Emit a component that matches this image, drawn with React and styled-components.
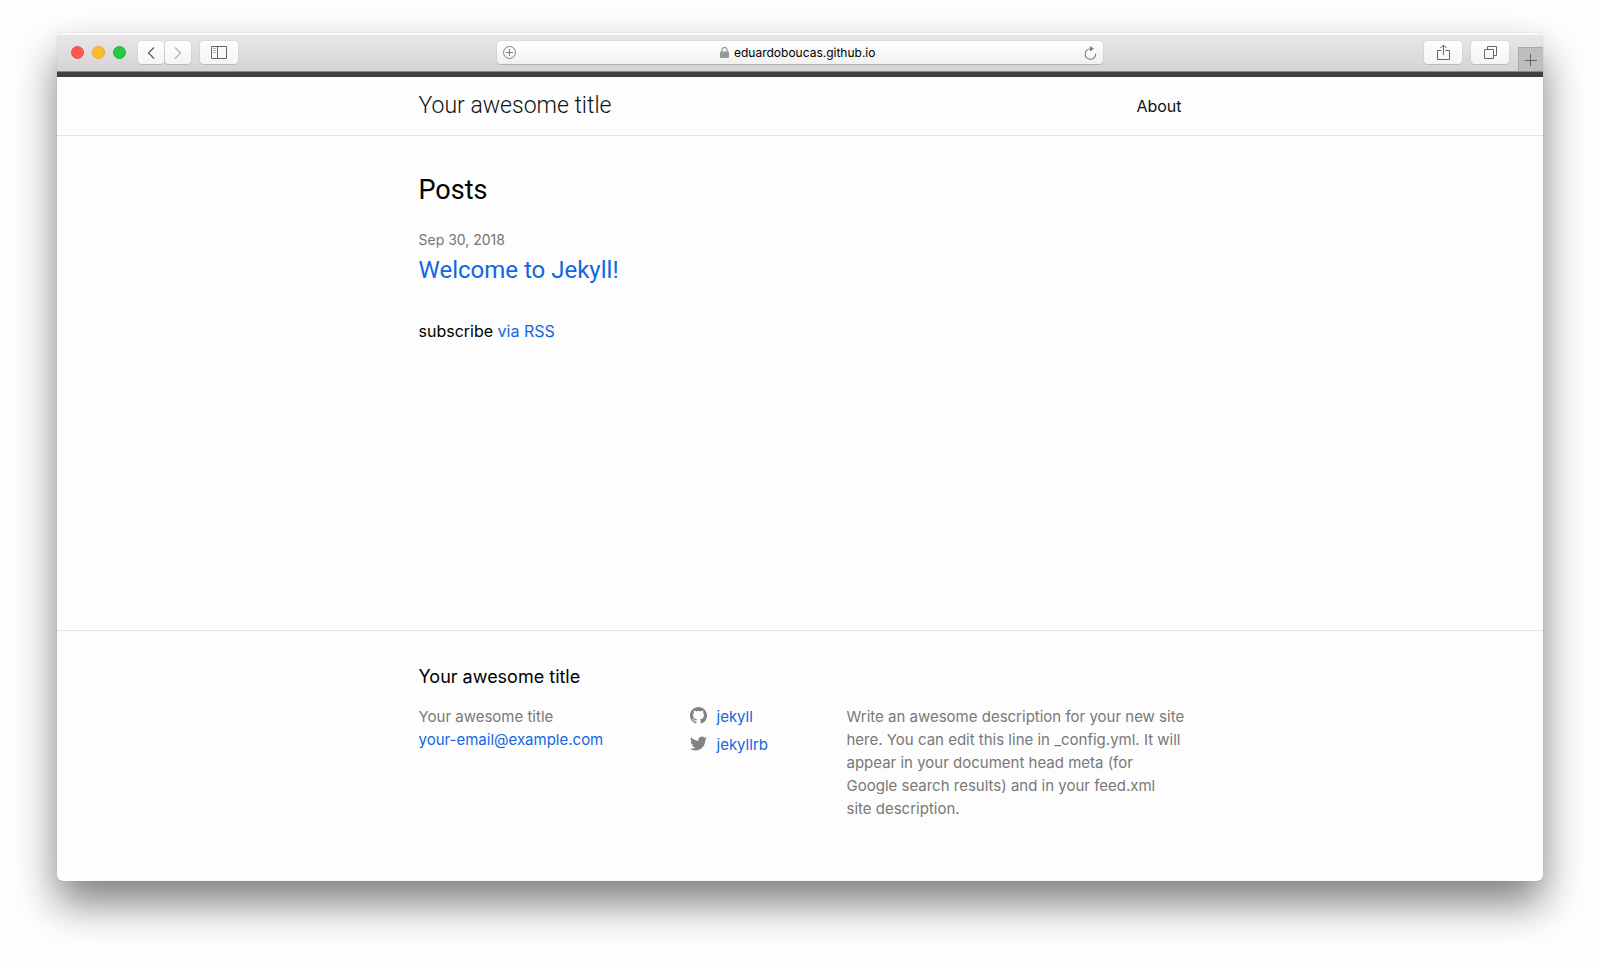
import React from "react";
import styled, { createGlobalStyle } from "styled-components";

const GlobalStyle = createGlobalStyle`
  * { box-sizing: border-box; }
  body {
    margin: 0;
    background: #fefefe;
    color: #111;
    font-family: Inter, "Liberation Sans", sans-serif;
    font-size: 15px;
    line-height: 23px;
  }
  h1, h2, h3, p, ul { margin: 0; padding: 0; font-weight: 400; }
  ul { list-style: none; }
  button { padding: 0; border: 0; font: inherit; color: inherit; }
  svg { display: block; }
`;

const displayFont = `Roboto, Inter, "Liberation Sans", sans-serif`;

const Desktop = styled.div`
  min-height: 100vh;
  padding: 33px 57px 82px;
  display: flex;
  flex-direction: column;
`;

const BrowserWindow = styled.div`
  flex: 1;
  display: flex;
  flex-direction: column;
  overflow: hidden;
  border-radius: 6px;
  background: #fdfdfd;
  box-shadow: 0 0 1px rgba(0, 0, 0, 0.3), 0 22px 42px rgba(0, 0, 0, 0.5);
`;

const Toolbar = styled.div`
  height: 39px;
  flex: none;
  display: grid;
  grid-template-columns: 1fr minmax(0, 606px) 1fr;
  align-items: center;
  background: linear-gradient(#e9e7e9, #d5d3d5);
  border-top: 1px solid #fcfcfc;
  border-bottom: 1px solid #8a888a;
  box-shadow: inset 0 1px 0 #f8f8f8;
`;

const ToolGroup = styled.div`
  height: 37px;
  display: flex;
  align-items: center;
  justify-content: ${(p) => (p.$end ? "flex-end" : "flex-start")};
  gap: 9px;
  padding-left: ${(p) => (p.$end ? 0 : 14)}px;
`;

const Lights = styled.div`
  display: flex;
  gap: 8px;
  margin-right: 3px;
`;

const Light = styled.button`
  width: 13px;
  height: 13px;
  border-radius: 50%;
  background: ${(p) => p.$color};
  border: 1px solid ${(p) => p.$edge};
`;

const History = styled.div`
  display: flex;
  gap: 1px;
`;

const ToolButton = styled.button`
  width: ${(p) => (p.$narrow ? 26 : 38)}px;
  height: 23px;
  display: flex;
  align-items: center;
  justify-content: center;
  border-radius: 4px;
  background: linear-gradient(#fefefe, #f4f4f4);
  box-shadow: 0 1px 0 #bebcbe, 0 0 0 1px rgba(0, 0, 0, 0.04);
  color: ${(p) => (p.$dim ? "#b5b5b5" : "#666")};
`;

const NewTab = styled.button`
  align-self: flex-end;
  width: 25px;
  height: 24px;
  display: flex;
  align-items: center;
  justify-content: center;
  background: #bfbdbf;
  border-top: 1px solid #aaa8aa;
  border-left: 1px solid #aaa8aa;
  color: #666;
`;

const AddressBar = styled.form`
  height: 23px;
  display: flex;
  align-items: center;
  justify-content: space-between;
  padding: 0 6px;
  border-radius: 4px;
  background: linear-gradient(#fefefe, #f1f1f1);
  box-shadow: 0 1px 0 #b4b2b4, 0 0 0 1px rgba(0, 0, 0, 0.04);
`;

const AddressAction = styled.button`
  background: none;
  color: #808080;
`;

const AddressLabel = styled.label`
  display: flex;
  align-items: center;
  gap: 5px;
  color: #999;
`;

const AddressInput = styled.input`
  width: 146px;
  height: 20px;
  padding: 0;
  border: 0;
  outline: 0;
  background: none;
  font-family: inherit;
  font-size: 12px;
  color: #000;
`;

const Wrapper = styled.div`
  width: 100%;
  max-width: 763px;
  margin: 0 auto;
`;

const SiteHeader = styled.header`
  border-top: 5px solid #404040;
  border-bottom: 1px solid #e4e4e4;
`;

const HeaderRow = styled(Wrapper)`
  height: 58px;
  display: flex;
  align-items: center;
  justify-content: space-between;
`;

const SiteTitle = styled.a`
  font-family: ${displayFont};
  font-size: 23px;
  font-weight: 300;
  line-height: 32px;
  color: #111;
  text-decoration: none;
`;

const NavLink = styled.a`
  display: block;
  font-size: 16px;
  color: #111;
  text-decoration: none;
`;

const Main = styled.main`
  flex: 1;
  padding: 36px 0 32px;
`;

const PageHeading = styled.h1`
  font-family: ${displayFont};
  font-size: 27px;
  line-height: 36px;
  color: #000;
`;

const PostList = styled.ul`
  padding: 20px 0 31px;
`;

const PostDate = styled.time`
  display: block;
  font-size: 14px;
  color: #757575;
`;

const PostTitle = styled.h2`
  font-family: ${displayFont};
  font-size: 24px;
  line-height: 38px;
`;

const Link = styled.a`
  color: #1266e0;
  text-decoration: none;
`;

const Subscribe = styled.p`
  font-size: 16px;
  color: #000;
`;

const SiteFooter = styled.footer`
  border-top: 1px solid #e4e4e4;
  padding: 33px 0 61px;
`;

const FooterHeading = styled.h2`
  margin-bottom: 15px;
  font-size: 18px;
  line-height: 26px;
  color: #000;
`;

const FooterColumns = styled.div`
  display: grid;
  grid-template-columns: 271fr 157fr 339fr;
  margin-right: -4px;
  color: #787878;
`;

const SocialList = styled.ul`
  display: grid;
  align-content: start;
  gap: 5px;
`;

const SocialItem = styled.li`
  display: flex;
  gap: 10px;
  color: #828282;

  svg { margin-top: 2px; }
`;

const stroke = { fill: "none", stroke: "currentColor" };

const Chevron = ({ right }) => (
  <svg width="10" height="14" viewBox="0 0 10 14" {...stroke} strokeWidth="1.4" aria-hidden="true">
    <path d={right ? "M2 1.5 7.5 7 2 12.500" : "M8 1.500 2.500 7 8 12.500"} />
  </svg>
);

const SidebarIcon = () => (
  <svg width="16" height="13" viewBox="0 0 16 13" {...stroke} aria-hidden="true">
    <path d="M.5.5h15v12H.5zM6.500.5v12" />
    <path d="M2 2.500h3M2 4.500h3M2 6.500h3" opacity=".5" />
  </svg>
);

const ShareIcon = () => (
  <svg width="13" height="17" viewBox="0 0 13 17" {...stroke} aria-hidden="true">
    <path d="M4.500 6.500h-4v9h12v-9h-4M6.500 11V1M3.500 4l3-3 3 3" />
  </svg>
);

const TabsIcon = () => (
  <svg width="13" height="13" viewBox="0 0 13 13" {...stroke} aria-hidden="true">
    <path d="M.5 3.500h9v9h-9zM3.500 3.500v-3h9v9h-3" />
  </svg>
);

const PlusIcon = () => (
  <svg width="12" height="12" viewBox="0 0 12 12" {...stroke} aria-hidden="true">
    <path d="M5.500 0v12M0 6.500h12" />
  </svg>
);

const CirclePlusIcon = () => (
  <svg width="13" height="13" viewBox="0 0 13 13" {...stroke} aria-hidden="true">
    <circle cx="6.500" cy="6.500" r="6" />
    <path d="M6.500 3v7M3 6.500h7" />
  </svg>
);

const LockIcon = () => (
  <svg width="9" height="11" viewBox="0 0 9 11" aria-hidden="true">
    <path d="M2 5V3a2.500 2.500 0 0 1 5 0v2" fill="none" stroke="currentColor" strokeWidth="1.200" />
    <rect y="4.500" width="9" height="6.500" rx="1" fill="currentColor" />
  </svg>
);

const ReloadIcon = () => (
  <svg width="13" height="14" viewBox="0 0 13 14" {...stroke} strokeWidth="1.100" aria-hidden="true">
    <path d="M11.700 7.500A5.300 5.300 0 1 1 6.400 2.700" />
    <path d="M6 0l4 2.700L6 5.400z" fill="currentColor" stroke="none" />
  </svg>
);

const GitHubIcon = () => (
  <svg width="17" height="17" viewBox="0 0 16 16" fill="currentColor" aria-hidden="true">
    <path d="M8 0C3.580 0 0 3.580 0 8c0 3.540 2.290 6.530 5.470 7.590.4.070.55-.17.55-.38 0-.19-.01-.82-.01-1.490-2.010.37-2.530-.49-2.690-.94-.09-.23-.48-.94-.82-1.130-.28-.15-.68-.52-.01-.53.63-.01 1.080.58 1.230.82.72 1.210 1.870.87 2.330.66.07-.52.28-.87.51-1.070-1.780-.2-3.640-.89-3.640-3.950 0-.87.31-1.590.82-2.150-.08-.2-.36-1.020.08-2.120 0 0 .67-.21 2.200.82.64-.18 1.320-.27 2-.27s1.360.09 2 .27c1.530-1.040 2.200-.82 2.200-.82.44 1.100.16 1.920.08 2.120.51.56.82 1.270.82 2.150 0 3.070-1.870 3.750-3.650 3.950.29.25.54.73.54 1.480 0 1.070-.01 1.930-.01 2.200 0 .21.15.46.55.38A8.010 8.010 0 0 0 16 8c0-4.420-3.580-8-8-8z" />
  </svg>
);

const TwitterIcon = () => (
  <svg width="17" height="17" viewBox="0 0 16 16" fill="currentColor" aria-hidden="true">
    <path d="M15.969 3.058c-.586.26-1.217.436-1.878.515.675-.405 1.194-1.045 1.438-1.809-.632.375-1.332.647-2.076.793a3.270 3.270 0 0 0-5.572 2.980A9.280 9.280 0 0 1 1.140 2.120a3.270 3.270 0 0 0 1.012 4.365 3.260 3.260 0 0 1-1.481-.41v.042a3.270 3.270 0 0 0 2.622 3.206 3.300 3.300 0 0 1-1.476.056 3.270 3.270 0 0 0 3.054 2.270A6.560 6.560 0 0 1 .031 13.002a9.250 9.250 0 0 0 5.012 1.469c6.014 0 9.302-4.982 9.302-9.302 0-.142-.003-.283-.01-.423a6.640 6.640 0 0 0 1.634-1.688z" />
  </svg>
);

export default function App() {
  return (
    <>
      <GlobalStyle />
      <Desktop>
        <BrowserWindow>
          <Toolbar>
            <ToolGroup>
              <Lights>
                <Light aria-label="Close" $color="#fc5753" $edge="#e5504a" />
                <Light aria-label="Minimize" $color="#fdbc2e" $edge="#e3a52a" />
                <Light aria-label="Zoom" $color="#27c93f" $edge="#22b236" />
              </Lights>
              <History>
                <ToolButton $narrow aria-label="Back"><Chevron /></ToolButton>
                <ToolButton $narrow $dim aria-label="Forward"><Chevron right /></ToolButton>
              </History>
              <ToolButton aria-label="Sidebar"><SidebarIcon /></ToolButton>
            </ToolGroup>
            <AddressBar>
              <AddressAction type="button" aria-label="Add bookmark"><CirclePlusIcon /></AddressAction>
              <AddressLabel>
                <LockIcon />
                <AddressInput aria-label="Address" defaultValue="eduardoboucas.github.io" />
              </AddressLabel>
              <AddressAction type="button" aria-label="Reload"><ReloadIcon /></AddressAction>
            </AddressBar>
            <ToolGroup $end>
              <ToolButton aria-label="Share"><ShareIcon /></ToolButton>
              <ToolButton aria-label="Show tabs"><TabsIcon /></ToolButton>
              <NewTab aria-label="New tab"><PlusIcon /></NewTab>
            </ToolGroup>
          </Toolbar>

          <SiteHeader>
            <HeaderRow>
              <SiteTitle href="#home">Your awesome title</SiteTitle>
              <nav><NavLink href="#about">About</NavLink></nav>
            </HeaderRow>
          </SiteHeader>

          <Main>
            <Wrapper>
              <PageHeading>Posts</PageHeading>
              <PostList>
                <li>
                  <PostDate dateTime="2018-09-30">Sep 30, 2018</PostDate>
                  <PostTitle><Link href="#welcome">Welcome to Jekyll!</Link></PostTitle>
                </li>
              </PostList>
              <Subscribe>subscribe <Link href="#feed">via RSS</Link></Subscribe>
            </Wrapper>
          </Main>

          <SiteFooter>
            <Wrapper>
              <FooterHeading>Your awesome title</FooterHeading>
              <FooterColumns>
                <ul>
                  <li>Your awesome title</li>
                  <li><Link href="mailto:your-email@example.com">your-email@example.com</Link></li>
                </ul>
                <SocialList>
                  <SocialItem><GitHubIcon /><Link href="#github">jekyll</Link></SocialItem>
                  <SocialItem><TwitterIcon /><Link href="#twitter">jekyllrb</Link></SocialItem>
                </SocialList>
                <p>
                  Write an awesome description for your new site here. You can edit this line in
                  _config.yml. It will appear in your document head meta (for Google search results)
                  and in your feed.xml site&nbsp;description.
                </p>
              </FooterColumns>
            </Wrapper>
          </SiteFooter>
        </BrowserWindow>
      </Desktop>
    </>
  );
}
